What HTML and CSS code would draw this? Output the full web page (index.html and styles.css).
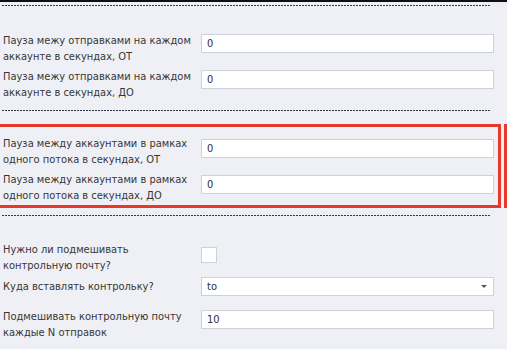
FILE: index.html
```html
<!DOCTYPE html>
<html lang="ru">
<head>
    <meta charset="UTF-8">
    <title>Настройки рассылки</title>
    <link rel="stylesheet" href="styles.css">
</head>
<body>
    <div class="settings">
        <div class="divider first"></div>

        <div class="group top-group">
            <div class="row">
                <label class="label">Пауза межу отправками на каждом<br>аккаунте в секундах, ОТ</label>
                <input class="field" type="text" value="0">
            </div>
            <div class="row">
                <label class="label">Пауза межу отправками на каждом<br>аккаунте в секундах, ДО</label>
                <input class="field" type="text" value="0">
            </div>
        </div>

        <div class="divider"></div>

        <div class="highlight">
            <div class="row">
                <label class="label">Пауза между аккаунтами в рамках<br>одного потока в секундах, ОТ</label>
                <input class="field" type="text" value="0">
            </div>
            <div class="row">
                <label class="label">Пауза между аккаунтами в рамках<br>одного потока в секундах, ДО</label>
                <input class="field" type="text" value="0">
            </div>
        </div>

        <div class="divider"></div>

        <div class="group bottom-group">
            <div class="row check-row">
                <label class="label">Нужно ли подмешивать<br>контрольную почту?</label>
                <span class="checkbox"></span>
            </div>
            <div class="row select-row">
                <label class="label">Куда вставлять контрольку?</label>
                <div class="field select">
                    <span>to</span>
                    <span class="arrow"></span>
                </div>
            </div>
            <div class="row">
                <label class="label">Подмешивать контрольную почту<br>каждые N отправок</label>
                <input class="field" type="text" value="10">
            </div>
        </div>
    </div>
</body>
</html>
```

FILE: styles.css
```css
* {
    box-sizing: border-box;
}

html,
body {
    margin: 0;
    padding: 0;
}

body {
    background-color: #eff0f5;
    border-top: 2px solid #111;
    font-family: "DejaVu Sans Condensed", "DejaVu Sans", Verdana, sans-serif;
    font-size: 11px;
    color: #363636;
    width: 507px;
    height: 349px;
    overflow: hidden;
}

.settings {
    position: relative;
    padding: 0 0 0 3px;
}

.divider {
    width: 489px;
    height: 1px;
    margin-left: -1px;
    background-image: repeating-linear-gradient(90deg, #333b48 0 2px, transparent 2px 3px);
}

.divider.first {
    margin-top: 3px;
}

.row {
    display: flex;
    align-items: flex-start;
    height: 36px;
}

.label {
    width: 198px;
    line-height: 16px;
    white-space: nowrap;
}

.field {
    width: 293px;
    height: 19px;
    margin-top: 1px;
    border: 1px solid #cfd1da;
    background-color: #fff;
    font-family: "DejaVu Sans Condensed", "DejaVu Sans", Verdana, sans-serif;
    font-size: 11px;
    color: #2e2e3a;
    padding: 0 5px;
    outline: none;
}

.top-group {
    padding-top: 27px;
}

.top-group .row:last-child {
    height: 41px;
}

.highlight {
    position: relative;
    margin: 13px 0 0 -8px;
    padding: 9px 0 0 8px;
    width: 506px;
    height: 84px;
    border: 3px solid #e8382b;
    border-left: none;
}

.highlight .field {
    margin-top: 3px;
}

.highlight .row:last-child {
    height: 33px;
}

.highlight::after {
    content: "";
    position: absolute;
    top: -3px;
    right: -9px;
    width: 3px;
    height: 84px;
    background-color: #e8382b;
}

.highlight + .divider {
    margin-top: 7px;
}

.bottom-group {
    padding-top: 26px;
}

.check-row {
    height: 34px;
}

.checkbox {
    width: 16px;
    height: 16px;
    margin-top: 5px;
    border: 1px solid #cfd1da;
    background-color: #fff;
}

.select-row {
    height: 33px;
}

.select-row .label {
    padding-top: 3px;
}

.select {
    display: flex;
    align-items: center;
    justify-content: space-between;
    padding-right: 6px;
}

.arrow {
    width: 0;
    height: 0;
    border-left: 3px solid transparent;
    border-right: 3px solid transparent;
    border-top: 3px solid #555;
}
```
